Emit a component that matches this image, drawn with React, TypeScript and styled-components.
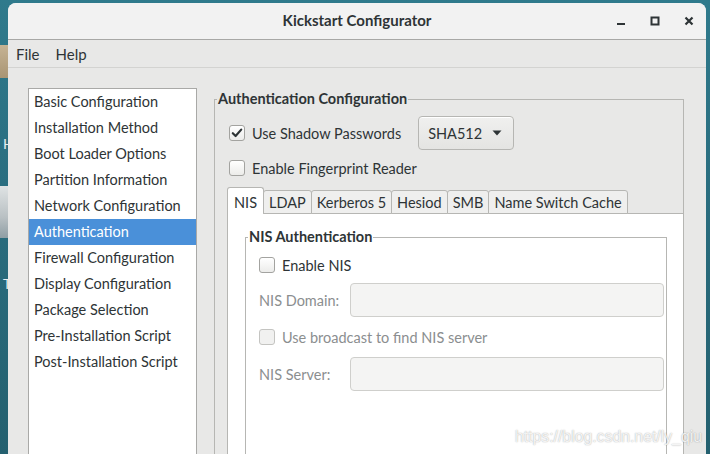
import React from "react";
import styled, { createGlobalStyle } from "styled-components";

const GlobalStyle = createGlobalStyle`
  html, body {
    margin: 0;
    padding: 0;
    overflow: hidden;
    background: #2c6f80;
  }
  * {
    box-sizing: border-box;
  }
`;

const UI_FONT = `Lato, "Noto Sans", "DejaVu Sans", sans-serif`;
const TEXT_SIZE = "14.5px";

const Desktop = styled.div`
  position: relative;
  width: 710px;
  height: 454px;
  display: flex;
  padding-top: 3px;
  background: linear-gradient(180deg, #2f7a8c 0%, #2a6e80 40%, #24606f 100%);
  overflow: hidden;
  font-family: ${UI_FONT};
`;

const DesktopEdge = styled.div`
  width: 8px;
  flex: none;
  display: flex;
  flex-direction: column;
  padding-top: 42px;
`;

const DesktopIcon = styled.div<{ $h: number; $bg: string; $gap: number }>`
  height: ${(p) => p.$h}px;
  margin-bottom: ${(p) => p.$gap}px;
  background: ${(p) => p.$bg};
`;

const DesktopLetter = styled.div<{ $gap: number }>`
  color: #e8eef0;
  font-size: 14px;
  line-height: 16px;
  margin-left: 3px;
  margin-bottom: ${(p) => p.$gap}px;
`;

const Window = styled.div`
  width: 698px;
  flex: none;
  display: flex;
  flex-direction: column;
  background: #e8e8e7;
  border-radius: 8px 8px 0 0;
  overflow: hidden;
  color: #2e3436;
`;

const TitleBar = styled.div`
  height: 37px;
  flex: none;
  display: grid;
  grid-template-columns: 1fr auto 1fr;
  align-items: center;
  background: #f2f2f2;
  border-bottom: 1px solid #a8a8a6;
`;

const Title = styled.div`
  grid-column: 2;
  font-size: 15px;
  font-weight: 700;
  color: #2e3436;
  padding-bottom: 2px;
`;

const Controls = styled.div`
  grid-column: 3;
  justify-self: end;
  display: flex;
  align-items: center;
  gap: 17px;
  padding-right: 9px;
`;

const ControlButton = styled.div`
  width: 17px;
  height: 17px;
  display: flex;
  align-items: center;
  justify-content: center;
`;

const MenuBar = styled.div`
  height: 28px;
  flex: none;
  display: flex;
  align-items: center;
  gap: 16px;
  padding-left: 8px;
  background: #e8e8e7;
  border-bottom: 1px solid #d3d3d1;
  font-size: 15px;
`;

const MenuItem = styled.span`
  color: #2e3436;
`;

const Body = styled.div`
  flex: 1;
  display: flex;
  align-items: flex-start;
  gap: 17px;
  padding: 20px 22px 0 20px;
  min-height: 0;
`;

const Sidebar = styled.div`
  width: 169px;
  height: 400px;
  flex: none;
  background: #ffffff;
  border: 1px solid #a9a9a7;
  border-bottom: none;
  display: flex;
  flex-direction: column;
`;

const SidebarItem = styled.div<{ $selected?: boolean }>`
  height: 26px;
  line-height: 25px;
  padding-left: 5px;
  font-size: ${TEXT_SIZE};
  white-space: nowrap;
  color: ${(p) => (p.$selected ? "#ffffff" : "#2e3436")};
  background: ${(p) => (p.$selected ? "#4a90d9" : "transparent")};
`;

const Frame = styled.fieldset`
  margin: 0;
  padding: 0;
  border: 1px solid #b6b6b3;
  border-bottom: none;
  min-width: 0;
  display: flex;
  flex-direction: column;
`;

const FrameLabel = styled.legend`
  font-size: ${TEXT_SIZE};
  font-weight: 700;
  color: #2e3436;
  padding: 0 1px;
  margin-left: 2px;
  line-height: 18px;
`;

const FrameContent = styled.div<{ $pad: string }>`
  flex: 1;
  display: flex;
  flex-direction: column;
  padding: ${(p) => p.$pad};
`;

const MainFrame = styled(Frame)`
  flex: 1;
  height: 400px;
  margin-top: 2px;
`;

const CheckRow = styled.label<{ $height: number; $disabled?: boolean }>`
  height: ${(p) => p.$height}px;
  flex: none;
  display: flex;
  align-items: center;
  gap: 7px;
  font-size: ${TEXT_SIZE};
  color: ${(p) => (p.$disabled ? "#8b8e8f" : "#2e3436")};
`;

const CheckBox = styled.span<{ $disabled?: boolean }>`
  width: 16px;
  height: 16px;
  flex: none;
  border: 1px solid ${(p) => (p.$disabled ? "#c4c4c1" : "#a3a3a0")};
  border-radius: 3px;
  background: ${(p) =>
    p.$disabled ? "#f1f1f0" : "linear-gradient(180deg, #ffffff, #ececea)"};
  display: flex;
  align-items: center;
  justify-content: center;
`;

const DropButton = styled.div`
  margin-left: 10px;
  width: 96px;
  height: 34px;
  display: flex;
  align-items: center;
  justify-content: space-between;
  padding: 0 11px 0 9px;
  border: 1px solid #b6b6b3;
  border-radius: 4px;
  background: linear-gradient(180deg, #f0f0ef, #e4e4e2);
  box-shadow: inset 0 1px #ffffff;
  font-size: ${TEXT_SIZE};
  color: #2e3436;
`;

const Notebook = styled.div`
  margin: 1px -1px 0 0;
  flex: 1;
  display: flex;
  flex-direction: column;
`;

const TabStrip = styled.div`
  height: 27px;
  flex: none;
  display: flex;
  align-items: flex-end;
  position: relative;
  z-index: 1;
`;

const Tab = styled.div<{ $active?: boolean }>`
  height: ${(p) => (p.$active ? 27 : 24)}px;
  padding: ${(p) => (p.$active ? "2px 6px 0 6px" : "0 5px")};
  display: flex;
  align-items: center;
  font-size: ${TEXT_SIZE};
  color: #2e3436;
  border: 1px solid #b6b6b3;
  border-bottom: ${(p) => (p.$active ? "none" : "1px solid #b6b6b3")};
  border-radius: 3px 3px 0 0;
  margin-left: -1px;
  background: ${(p) => (p.$active ? "#ffffff" : "#efefee")};
  &:first-child {
    margin-left: 0;
  }
`;

const TabPanel = styled.div`
  flex: 1;
  margin-top: -1px;
  background: #ffffff;
  border: 1px solid #b6b6b3;
  border-bottom: none;
  padding: 14px 16px 0 17px;
  display: flex;
  flex-direction: column;
`;

const InnerFrame = styled(Frame)`
  flex: 1;
`;

const FieldGrid = styled.div<{ $top: number }>`
  display: grid;
  grid-template-columns: 91px 1fr;
  align-items: center;
  margin-top: ${(p) => p.$top}px;
`;

const FieldLabel = styled.div`
  font-size: ${TEXT_SIZE};
  color: #8b8e8f;
`;

const TextInput = styled.div`
  height: 34px;
  border: 1px solid #cfcfcc;
  border-radius: 4px;
  background: #f4f4f3;
`;

const Watermark = styled.div`
  position: absolute;
  right: 8px;
  bottom: 8px;
  font-family: "Liberation Sans", Arial, sans-serif;
  font-size: 15.8px;
  color: rgba(255, 255, 255, 0.85);
  text-shadow: 0 0 1px rgba(0, 0, 0, 0.25), 0 0 2px rgba(0, 0, 0, 0.15);
`;

const CheckMark = () => (
  <svg width="12" height="12" viewBox="0 0 12 12">
    <path
      d="M1.8 6.2 L4.6 9 L10.2 2.6"
      fill="none"
      stroke="#2e3436"
      strokeWidth="2.2"
      strokeLinecap="round"
      strokeLinejoin="round"
    />
  </svg>
);

const Arrow = () => (
  <svg width="10" height="6" viewBox="0 0 10 6">
    <path d="M0.5 0.5 H9.5 L5 5.5 Z" fill="#2e3436" />
  </svg>
);

const sections = [
  "Basic Configuration",
  "Installation Method",
  "Boot Loader Options",
  "Partition Information",
  "Network Configuration",
  "Authentication",
  "Firewall Configuration",
  "Display Configuration",
  "Package Selection",
  "Pre-Installation Script",
  "Post-Installation Script",
];

const tabs = ["NIS", "LDAP", "Kerberos 5", "Hesiod", "SMB", "Name Switch Cache"];

export default function App() {
  return (
    <>
      <GlobalStyle />
      <Desktop>
        <DesktopEdge>
          <DesktopIcon $h={33} $bg="linear-gradient(180deg,#c5b394,#a99574)" $gap={58} />
          <DesktopLetter $gap={34}>H</DesktopLetter>
          <DesktopIcon $h={52} $bg="linear-gradient(180deg,#dfe3e4,#b9c0c3 60%,#8f9ea4)" $gap={38} />
          <DesktopLetter $gap={0}>T</DesktopLetter>
        </DesktopEdge>

        <Window>
          <TitleBar>
            <Title>Kickstart Configurator</Title>
            <Controls>
              <ControlButton>
                <svg width="10" height="10" viewBox="0 0 10 10">
                  <rect x="1" y="7" width="8" height="2" fill="#2e3436" />
                </svg>
              </ControlButton>
              <ControlButton>
                <svg width="10" height="10" viewBox="0 0 10 10">
                  <rect x="1.5" y="1.5" width="7" height="7" fill="none" stroke="#2e3436" strokeWidth="2" />
                </svg>
              </ControlButton>
              <ControlButton>
                <svg width="10" height="10" viewBox="0 0 10 10">
                  <path d="M1.5 1.5 L8.5 8.5 M8.5 1.5 L1.5 8.5" stroke="#2e3436" strokeWidth="2.2" />
                </svg>
              </ControlButton>
            </Controls>
          </TitleBar>

          <MenuBar>
            <MenuItem>File</MenuItem>
            <MenuItem>Help</MenuItem>
          </MenuBar>

          <Body>
            <Sidebar>
              {sections.map((s) => (
                <SidebarItem key={s} $selected={s === "Authentication"}>
                  {s}
                </SidebarItem>
              ))}
            </Sidebar>

            <MainFrame>
              <FrameLabel>Authentication Configuration</FrameLabel>
              <FrameContent $pad="8px 0 0 12px">
                <CheckRow $height={34}>
                  <CheckBox style={{ marginLeft: 2 }}>
                    <CheckMark />
                  </CheckBox>
                  Use Shadow Passwords
                  <DropButton>
                    SHA512
                    <Arrow />
                  </DropButton>
                </CheckRow>
                <CheckRow $height={36}>
                  <CheckBox style={{ marginLeft: 2 }} />
                  Enable Fingerprint Reader
                </CheckRow>

                <Notebook>
                  <TabStrip>
                    {tabs.map((t, i) => (
                      <Tab key={t} $active={i === 0}>
                        {t}
                      </Tab>
                    ))}
                  </TabStrip>
                  <TabPanel>
                    <InnerFrame>
                      <FrameLabel>NIS Authentication</FrameLabel>
                      <FrameContent $pad="5px 2px 0 13px">
                        <CheckRow $height={28}>
                          <CheckBox />
                          Enable NIS
                        </CheckRow>
                        <FieldGrid $top={4}>
                          <FieldLabel>NIS Domain:</FieldLabel>
                          <TextInput />
                        </FieldGrid>
                        <CheckRow $height={40} $disabled>
                          <CheckBox $disabled />
                          Use broadcast to find NIS server
                        </CheckRow>
                        <FieldGrid $top={0}>
                          <FieldLabel>NIS Server:</FieldLabel>
                          <TextInput />
                        </FieldGrid>
                      </FrameContent>
                    </InnerFrame>
                  </TabPanel>
                </Notebook>
              </FrameContent>
            </MainFrame>
          </Body>
        </Window>

        <Watermark>https://blog.csdn.net/ly_qiu</Watermark>
      </Desktop>
    </>
  );
}
